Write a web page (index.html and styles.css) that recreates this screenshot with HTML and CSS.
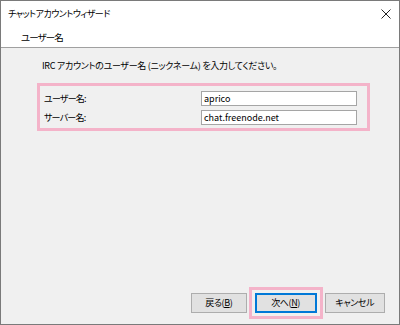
FILE: index.html
```html
<!DOCTYPE html>
<html lang="ja">
<head>
<meta charset="utf-8">
<link rel="stylesheet" href="styles.css">
</head>
<body>
<div class="window">
  <div class="titlebar">
    <span class="title">チャットアカウントウィザード</span>
    <svg class="close" width="10" height="10" viewBox="0 0 10 10"><path d="M0.5 0.5 L9.5 9.5 M9.5 0.5 L0.5 9.5" stroke="#222" stroke-width="1"/></svg>
  </div>
  <div class="header">ユーザー名</div>
  <div class="content">
    <p class="intro">IRC アカウントのユーザー名 (ニックネーム) を入力してください。</p>
    <div class="fields">
      <div class="row"><span class="label">ユーザー名:</span><div class="input">aprico</div></div>
      <div class="row"><span class="label">サーバー名:</span><div class="input">chat.freenode.net</div></div>
    </div>
  </div>
  <div class="footer">
    <button class="btn back">戻る(<u>B</u>)</button>
    <div class="hl"><button class="btn next">次へ(<u>N</u>)</button></div>
    <button class="btn cancel">キャンセル</button>
  </div>
</div>
</body>
</html>
```
FILE: styles.css
```css
html, body { margin: 0; padding: 0; }
body {
  font-family: "Noto Sans CJK JP", "Noto Sans", sans-serif;
  font-feature-settings: "palt";
  color: #000;
  font-size: 9px;
}
.window {
  width: 400px;
  height: 325px;
  box-sizing: border-box;
  border: 1px solid #7a7a7a;
  background: #f0f0f0;
  display: flex;
  flex-direction: column;
}
.titlebar {
  height: 26px;
  background: #fff;
  display: flex;
  align-items: center;
  justify-content: space-between;
  padding: 0 8px 0 7px;
}
.title { font-size: 9px; line-height: 12px; letter-spacing: -0.5px; }
.close { display: block; }
.header {
  background: #fff;
  height: 20px;
  line-height: 20px;
  padding-left: 20px;
  font-size: 9.5px;
  letter-spacing: -0.9px;
  border-bottom: 1px solid #a0a0a0;
}
.content {
  flex: 1;
  padding: 0 0 0 36px;
}
.intro {
  margin: 12px 0 0 5px;
  line-height: 12px;
  font-size: 9px;
  letter-spacing: -0.3px;
}
.fields {
  margin-top: 11px;
  width: 333px;
  height: 48px;
  box-sizing: border-box;
  border: 3px solid #f4b3c9;
  padding: 4px 10px 0 2px;
  display: flex;
  flex-direction: column;
  gap: 3px;
}
.row {
  display: flex;
  align-items: center;
  justify-content: space-between;
  height: 16px;
}
.label { font-size: 9px; padding-left: 2px; letter-spacing: -0.8px; }
.input {
  width: 156px;
  height: 15px;
  box-sizing: border-box;
  background: #fff;
  border: 1px solid #a5a5a5;
  font-size: 9px;
  line-height: 13px;
  padding-left: 2px;
}
.footer {
  display: flex;
  align-items: center;
  padding: 0 14px 5px 190px;
  height: 37px;
  box-sizing: border-box;
}
.btn {
  font-family: inherit;
  font-feature-settings: "palt";
  font-size: 9px;
  height: 20px;
  background: #e1e1e1;
  border: 1px solid #adadad;
  padding: 0;
  margin: 0;
  color: #000;
  line-height: 16px;
  letter-spacing: -0.4px;
}
.back { width: 56px; }
.hl {
  margin-left: 2px;
  border: 3px solid #f4b3c9;
  padding: 3px 3px;
  display: flex;
}
.next {
  width: 62px;
  border: 2px solid #0078d7;
  background: #e1e1e1;
}
.cancel { width: 61px; margin-left: 2px; }
u { text-decoration: underline; }
```
